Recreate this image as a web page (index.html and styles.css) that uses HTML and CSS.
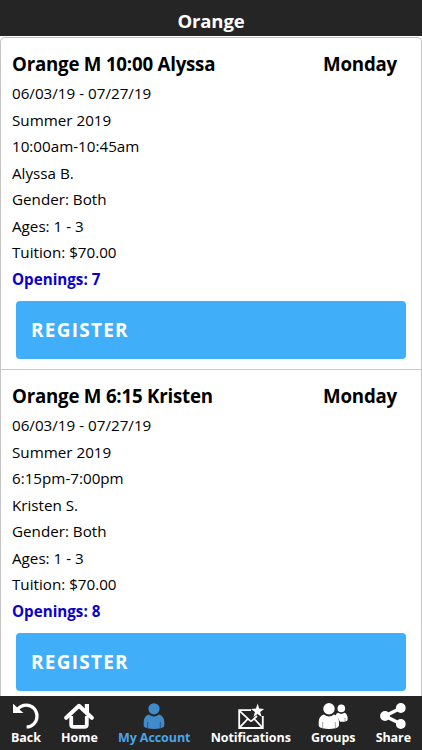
FILE: index.html
```
<!DOCTYPE html>
<html lang="en">
<head>
    <meta charset="UTF-8">
    <meta name="viewport" content="width=device-width, initial-scale=1.0">
    <title>Orange</title>
    <link rel="stylesheet" href="styles.css">
</head>
<body>
    <header class="header">
        <h1>Orange</h1>
    </header>
    <main class="class-list">
        <section class="class-item">
            <div class="class-title">
                <h2>Orange M 10:00 Alyssa</h2>
                <h2>Monday</h2>
            </div>
            <p>06/03/19 - 07/27/19</p>
            <p>Summer 2019</p>
            <p>10:00am-10:45am</p>
            <p>Alyssa B.</p>
            <p>Gender: Both</p>
            <p>Ages: 1 - 3</p>
            <p>Tuition: $70.00</p>
            <p class="openings">Openings: 7</p>
            <button type="button" class="register">REGISTER</button>
        </section>
        <section class="class-item">
            <div class="class-title">
                <h2>Orange M 6:15 Kristen</h2>
                <h2>Monday</h2>
            </div>
            <p>06/03/19 - 07/27/19</p>
            <p>Summer 2019</p>
            <p>6:15pm-7:00pm</p>
            <p>Kristen S.</p>
            <p>Gender: Both</p>
            <p>Ages: 1 - 3</p>
            <p>Tuition: $70.00</p>
            <p class="openings">Openings: 8</p>
            <button type="button" class="register">REGISTER</button>
        </section>
    </main>
    <nav class="tabs">
        <a class="tab">
            <svg width="28" height="28" viewBox="0 0 28 28">
                <path d="M5.5 7.5C8 4.5 11 3.2 14.2 3.2C20.5 3.2 25 8 25 14C25 20.3 20.2 25 14.6 25" fill="none" stroke="#fff" stroke-width="3.2"/>
                <path d="M1 1.8V11H11.5Z" fill="#fff"/>
            </svg>
            <span>Back</span>
        </a>
        <a class="tab">
            <svg width="30" height="28" viewBox="0 0 30 28">
                <path d="M2.2 15.8L15 3.8L27.8 15.8" fill="none" stroke="#fff" stroke-width="4" stroke-linecap="round" stroke-linejoin="round"/>
                <path d="M20.8 2H25V12L20.8 8Z" fill="#fff"/>
                <path d="M7.2 14V22.4Q7.2 24.9 9.7 24.9H20.3Q22.8 24.9 22.8 22.4V14" fill="none" stroke="#fff" stroke-width="3.8"/>
            </svg>
            <span>Home</span>
        </a>
        <a class="tab active">
            <svg width="22" height="28" viewBox="0 0 22 28">
                <circle cx="11" cy="6.8" r="5.6" fill="#428bca"/>
                <path d="M6 12.5Q11 16.5 16 12.5Q21.3 14 21.3 20V23.5Q21 25.5 17.5 26.2Q11 27.6 4.5 26.2Q1 25.5 .7 23.5V20Q.7 14 6 12.5Z" fill="#428bca"/>
                <path d="M4.7 20V26M17.3 20V26" stroke="#2c5578" stroke-width="1"/>
            </svg>
            <span>My Account</span>
        </a>
        <a class="tab">
            <svg width="28" height="28" viewBox="0 0 28 28">
                <path d="M14 8.2H2.2V26H25.8V14" fill="none" stroke="#fff" stroke-width="1.8"/>
                <path d="M2.5 8.8L13 18.6Q14 19.5 15 18.6L20 14M2.5 25.6L10.8 16.8M25.4 25.6L17.2 16.8" fill="none" stroke="#fff" stroke-width="1.7"/>
                <path d="M20.6 1.6L22.2 6.6L27.2 6.9L23.2 10L24.8 15L20.6 12L16.4 15L18 10L14 6.9L19 6.6Z" fill="#fff"/>
            </svg>
            <span>Notifications</span>
        </a>
        <a class="tab">
            <svg width="30" height="28" viewBox="0 0 30 28">
                <circle cx="23.3" cy="6.4" r="3.8" fill="#fff"/>
                <path d="M20 10.8Q23.3 13 26.5 10.8Q29.6 12 29.6 16V18.2Q28 20 22 19.8Q20.6 15.8 17.6 13.5Q18 11.5 20 10.8Z" fill="#fff"/>
                <circle cx="11" cy="6.8" r="5.7" fill="#fff"/>
                <path d="M6 12.5Q11 16.5 16 12.5Q21 14 21 20V23.5Q20.7 25.5 17.5 26.2Q11 27.6 4.5 26.2Q1 25.5 .7 23.5V20Q.7 14 6 12.5Z" fill="#fff"/>
                <path d="M4.7 20V26M17.3 20V26M27 16V19.3" stroke="#999" stroke-width=".9"/>
            </svg>
            <span>Groups</span>
        </a>
        <a class="tab">
            <svg width="28" height="28" viewBox="0 0 28 28">
                <path d="M22 6L6 14L22 22" fill="none" stroke="#fff" stroke-width="3.6"/>
                <g fill="#fff">
                    <circle cx="21.8" cy="6" r="4.9"/>
                    <circle cx="6" cy="14" r="4.9"/>
                    <circle cx="21.8" cy="22" r="4.9"/>
                </g>
            </svg>
            <span>Share</span>
        </a>
    </nav>
</body>
</html>
```
FILE: styles.css
```
* {
    box-sizing: border-box;
}
body {
    font-family: "Open Sans", sans-serif;
    margin: 0;
    height: 100vh;
    display: flex;
    flex-direction: column;
    overflow: hidden;
    background-color: #fff;
    color: #000;
}
h1, h2, p {
    margin: 0;
}
.header {
    flex: none;
    height: 36px;
    padding-top: 6px;
    background-color: #252525;
    color: #fff;
    text-align: center;
}
.header h1 {
    font-size: 18.5px;
    line-height: 30px;
    letter-spacing: -0.1px;
}
.class-list {
    flex: 1;
    min-height: 0;
    overflow: hidden;
    margin-top: 1px;
    border: 1px solid #c4c4c4;
    border-bottom: none;
    border-radius: 5px 5px 0 0;
}
.class-item {
    height: 332px;
    padding: 11px 15px 0 11px;
    border-bottom: 1px solid #c8c8c8;
}
.class-title {
    display: flex;
    justify-content: space-between;
    padding-right: 9px;
    margin-bottom: 1px;
}
.class-title h2 {
    font-size: 18.7px;
    line-height: 30px;
    letter-spacing: -0.22px;
}
.class-item p {
    font-size: 15.2px;
    line-height: 26.5px;
}
.class-item .openings {
    color: #0a00cf;
    font-weight: bold;
}
.register {
    display: block;
    width: 390px;
    height: 58px;
    margin: 8.5px 0 0 4px;
    padding: 0 15px;
    border: none;
    border-radius: 4px;
    background-color: #41aef9;
    color: #fff;
    font-family: inherit;
    font-size: 19px;
    font-weight: bold;
    letter-spacing: 1.25px;
    text-align: left;
}
.tabs {
    flex: none;
    display: flex;
    justify-content: space-between;
    height: 54px;
    padding: 6px 11px 0;
    background-color: #252525;
}
.tab {
    display: flex;
    flex-direction: column;
    align-items: center;
    color: #fff;
    font-size: 12.5px;
    font-weight: bold;
    letter-spacing: -0.08px;
    line-height: 16px;
}
.tab.active {
    color: #49a5ea;
}
```
